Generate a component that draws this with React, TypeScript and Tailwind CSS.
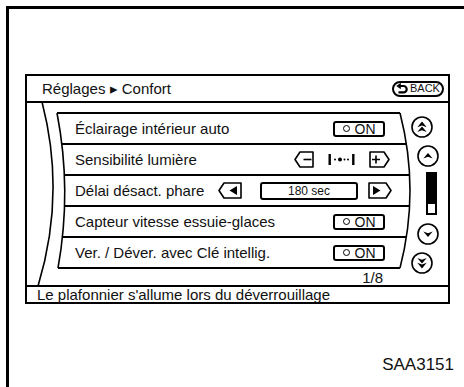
import React from "react";

type Ctrl = "on" | "level" | "time";

const rows: { label: string; ctrl: Ctrl }[] = [
  { label: "Éclairage intérieur auto", ctrl: "on" },
  { label: "Sensibilité lumière", ctrl: "level" },
  { label: "Délai désact. phare", ctrl: "time" },
  { label: "Capteur vitesse essuie-glaces", ctrl: "on" },
  { label: "Ver. / Déver. avec Clé intellig.", ctrl: "on" },
];

// separators follow the curved edges of the list
const seps = [
  "ml-[30px] w-[343px]",
  "ml-[35px] w-[344px]",
  "ml-[37px] w-[346px]",
  "ml-[38px] w-[345px]",
  "ml-[35px] w-[344px]",
  "ml-[31px] w-[342px]",
];

const OnButton = () => (
  <div className="mr-[8px] flex h-[16px] w-[52px] items-center justify-center gap-[5px] rounded-[3px] border-2 border-black text-[14px] leading-none">
    <span className="h-[7px] w-[7px] rounded-full border-[1.5px] border-black" />
    <span>ON</span>
  </div>
);

const Pent = ({ dir, w, inner }: { dir: "l" | "r"; w: number; inner: "minus" | "plus" | "tri" }) => {
  const h = 17;
  const p = 6;
  const outline =
    dir === "l"
      ? `M1,${h / 2} L${p},1 H${w - 1} V${h - 1} H${p} Z`
      : `M${w - 1},${h / 2} L${w - p},1 H1 V${h - 1} H${w - p} Z`;
  const cx = dir === "l" ? (p + w) / 2 + 0.5 : (w - p) / 2 - 0.5;
  return (
    <svg width={w} height={h} viewBox={`0 0 ${w} ${h}`}>
      <path d={outline} fill="white" stroke="black" strokeWidth="1.6" strokeLinejoin="round" />
      {inner === "minus" && <path d={`M${cx - 4},8.5 H${cx + 4}`} stroke="black" strokeWidth="1.6" />}
      {inner === "plus" && <path d={`M${cx - 4},8.5 H${cx + 4} M${cx},4.5 V12.5`} stroke="black" strokeWidth="1.6" />}
      {inner === "tri" &&
        (dir === "l" ? (
          <path d={`M${cx - 4},8.5 L${cx + 3.5},4 V13 Z`} fill="black" />
        ) : (
          <path d={`M${cx + 4},8.5 L${cx - 3.5},4 V13 Z`} fill="black" />
        ))}
    </svg>
  );
};

const Level = () => (
  <svg width="27" height="13" viewBox="0 0 27 13">
    <rect x="0.5" y="1" width="2.4" height="11" fill="black" />
    <circle cx="7" cy="6.5" r="1" fill="black" />
    <circle cx="12" cy="6.5" r="2" fill="black" />
    <circle cx="16.5" cy="6.5" r="1" fill="black" />
    <circle cx="20" cy="6.5" r="1" fill="black" />
    <rect x="24.1" y="1" width="2.4" height="11" fill="black" />
  </svg>
);

const Control = ({ ctrl }: { ctrl: Ctrl }) => {
  if (ctrl === "on") return <OnButton />;
  if (ctrl === "level")
    return (
      <div className="mr-[3px] flex items-center gap-[14px]">
        <Pent dir="l" w={20} inner="minus" />
        <Level />
        <Pent dir="r" w={21} inner="plus" />
      </div>
    );
  return (
    <div className="mr-[1px] flex items-center">
      <Pent dir="l" w={24} inner="tri" />
      <div className="ml-[18px] flex h-[18px] w-[98px] items-center justify-center rounded-[3px] border-2 border-black text-[12px] leading-none">
        180 sec
      </div>
      <div className="ml-[10px]">
        <Pent dir="r" w={24} inner="tri" />
      </div>
    </div>
  );
};

const arrow = (cy: number) => `M6.3,${cy + 2.6} L11,${cy - 3} L15.7,${cy + 2.6} L11,${cy + 0.8} Z`;

const RoundBtn = ({ kind }: { kind: "uu" | "u" | "d" | "dd" }) => {
  const double = kind === "uu" || kind === "dd";
  const down = kind === "d" || kind === "dd";
  return (
    <svg width="22" height="22" viewBox="0 0 22 22">
      <circle cx="11" cy="11" r="10" fill="white" stroke="black" strokeWidth="1.6" />
      <g transform={down ? "rotate(180 11 11)" : undefined} fill="black">
        {double ? (
          <>
            <path d={arrow(8.6)} />
            <path d={arrow(13.4)} />
          </>
        ) : (
          <path d={arrow(11)} />
        )}
      </g>
    </svg>
  );
};

const BackIcon = () => (
  <svg width="12" height="11" viewBox="0 0 12 11">
    <path d="M4,3 H7.5 A3.2,3.2 0 0 1 7.5,9.4 H2.5" fill="none" stroke="black" strokeWidth="2.2" />
    <path d="M0.3,3 L4.8,-0.2 V6.2 Z" fill="black" />
  </svg>
);

export default function App() {
  return (
    <div className="h-[387px] w-[464px] overflow-hidden bg-white pl-[6px] pt-[6px] font-['Liberation_Sans',Arial,sans-serif] text-[#111]">
      <div className="h-full border-l-[3px] border-t-[3px] border-black pl-[16px] pt-[65px]">
        <div className="flex h-[230px] w-[425px] flex-col border-2 border-black">
          <div className="flex h-[27px] items-center justify-between border-b-2 border-black pl-[15px] pr-[4px]">
            <span className="text-[15px] leading-none">Réglages ▸ Confort</span>
            <div className="flex h-[16px] w-[52px] items-center gap-[2px] rounded-full border-2 border-black pl-[2px] text-[11px] leading-none">
              <BackIcon />
              <span>BACK</span>
            </div>
          </div>

          <div className="relative flex h-[182px]">
            <svg className="pointer-events-none absolute inset-0" width="421" height="182" viewBox="0 0 421 182">
              <path d="M15,-1 Q39,91 11,183" fill="none" stroke="black" strokeWidth="1.6" />
              <path d="M30,10 Q45,87.5 31,165" fill="none" stroke="black" strokeWidth="1.6" />
              <path d="M373,10 Q393,87.5 373,165" fill="none" stroke="black" strokeWidth="1.6" />
            </svg>

            <div className="w-[383px] pt-[9px]">
              <div className={`h-[2px] bg-black ${seps[0]}`} />
              {rows.map((r, i) => (
                <div key={r.label}>
                  <div className="ml-[48px] flex h-[29px] w-[318px] items-center justify-between text-[15px] leading-none">
                    <span>{r.label}</span>
                    <Control ctrl={r.ctrl} />
                  </div>
                  <div className={`h-[2px] bg-black ${seps[i + 1]}`} />
                </div>
              ))}
              <div className="flex h-[16px] items-center justify-end pr-[27px] text-[15px] leading-none">1/8</div>
            </div>

            <div className="flex flex-col pt-[13px]">
              <div className="ml-[1px]">
                <RoundBtn kind="uu" />
              </div>
              <div className="ml-[7px] mt-[7px]">
                <RoundBtn kind="u" />
              </div>
              <div className="ml-[16px] mt-[5px] flex h-[43px] w-[11px] flex-col border-2 border-black bg-black">
                <div className="flex-1" />
                <div className="h-[9px] bg-white" />
              </div>
              <div className="ml-[7px] mt-[8px]">
                <RoundBtn kind="d" />
              </div>
              <div className="ml-[1px] mt-[7px]">
                <RoundBtn kind="dd" />
              </div>
            </div>
          </div>

          <div className="flex h-[17px] items-center border-t-2 border-black pl-[10px] text-[15px] leading-none">
            Le plafonnier s'allume lors du déverrouillage
          </div>
        </div>

        <div className="mt-[52px] pr-[10px] text-right text-[17px] leading-none">SAA3151</div>
      </div>
    </div>
  );
}
